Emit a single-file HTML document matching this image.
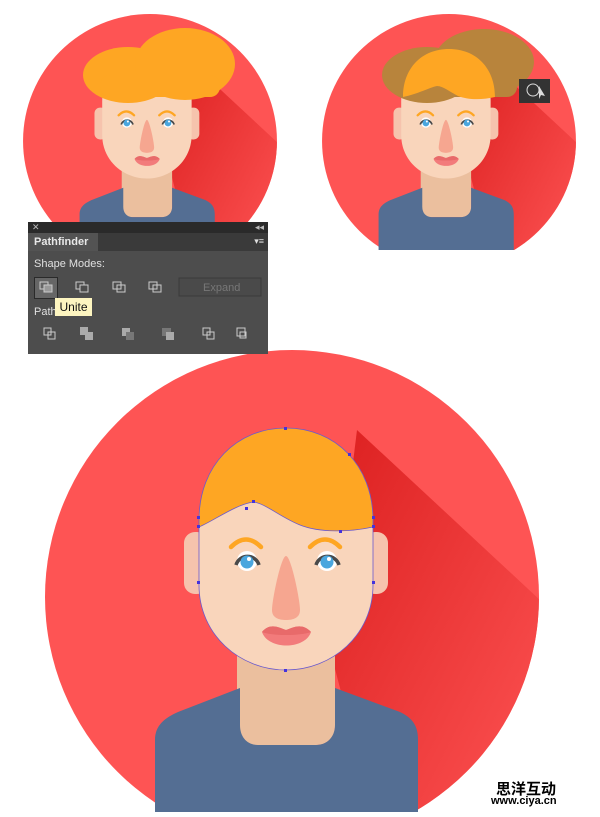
<!DOCTYPE html>
<html><head><meta charset="utf-8"><style>
body{margin:0;width:600px;height:817px;background:#fff;position:relative;overflow:hidden;font-family:"Liberation Sans",sans-serif}
svg{position:absolute;left:0;top:0}
.panel{position:absolute;left:28px;top:222px;width:240px;height:132px;background:#4d4d4d;font-size:11px;color:#ddd}
.bar{height:11px;background:#2a2a2a;color:#bbb;font-size:9px;line-height:11px;padding:0 4px}
.tabs{height:18px;background:#3a3a3a;position:relative}
.tab{position:absolute;left:0;top:0;width:64px;height:18px;background:#535353;font-weight:bold;line-height:18px;padding-left:6px;color:#e8e8e8}
</style></head><body>
<svg width="600" height="817" viewBox="0 0 600 817">
<defs>
<linearGradient id="sh" x1="0" y1="0" x2="1" y2="1"><stop offset="0" stop-color="#d81a1a"/><stop offset="1" stop-color="#fe5454"/></linearGradient>
<clipPath id="cc"><circle cx="292" cy="597" r="247"/></clipPath>
<clipPath id="cb"><rect x="0" y="0" width="600" height="812"/></clipPath>
<g id="av">
 <circle cx="292" cy="597" r="247" fill="#fe5454"/>
 <path d="M357,430 L540,600 L540,840 L380,840 L330,650 Z" fill="url(#sh)" opacity="0.9" clip-path="url(#cc)"/>
 <rect x="237" y="630" width="98" height="115" rx="18" fill="#ebbf9e"/>
 <path d="M155,740 C155,725 165,718 178,712 L240,688 L240,725 C240,738 248,745 258,745 L316,745 C326,745 335,738 335,725 L335,688 L400,712 C412,718 418,725 418,740 L418,812 L155,812Z" fill="#546e93"/>
 <rect x="184" y="532" width="24" height="62" rx="11" fill="#f6c3ad"/>
 <rect x="364" y="532" width="24" height="62" rx="11" fill="#f6c3ad"/>
 <path d="M199,520 L199,585 C199,635 240,670 286,670 C332,670 373,635 373,585 L373,520 C373,465 335,428 286,428 C237,428 199,465 199,520Z" fill="#f9d5bb"/>
 <path d="M231,547 Q246,532 261,547 M310,547 Q325,532 340,547" stroke="#fea623" stroke-width="4.5" fill="none" stroke-linecap="round"/>
 <circle cx="247" cy="561" r="10" fill="#fff"/><circle cx="327" cy="561" r="10" fill="#fff"/>
 <path d="M236,565 A12,12 0 0 1 259,565 M316,565 A12,12 0 0 1 339,565" stroke="#4a4a4a" stroke-width="3.5" fill="none"/>
 <circle cx="247" cy="562" r="6.5" fill="#4aa6de"/><circle cx="327" cy="562" r="6.5" fill="#4aa6de"/>
 <circle cx="249" cy="559" r="2" fill="#fff"/><circle cx="329" cy="559" r="2" fill="#fff"/>
 <path d="M286,556 C281,556 272,600 272,610 C272,618 279,620 286,620 C293,620 300,618 300,610 C300,600 291,556 286,556Z" fill="#f6a690"/>
 <path d="M262,632 C270,622 280,628 286,630 C292,628 302,622 311,632 C305,650 268,650 262,632Z" fill="#f27b7b"/>
 <path d="M262,632 C270,622 280,628 286,630 C292,628 302,622 311,632 C300,636 272,636 262,632Z" fill="#e86a6a"/>
</g>
</defs>
<g clip-path="url(#cb)">
 <use href="#av"/>
 <path d="M199,527 L199,520 C199,465 237,428 286,428 C335,428 373,465 373,520 L373,527 C350,532 320,533 300,525 C280,517 265,503 253,502 C235,505 215,520 199,527Z" fill="#fea623"/>
 <path d="M199,520 L199,585 C199,635 240,670 286,670 C332,670 373,635 373,585 L373,520 C373,465 335,428 286,428 C237,428 199,465 199,520Z M199,527 C215,520 235,505 253,502 C265,503 280,517 300,525 C320,533 350,532 373,527" fill="none" stroke="#6a5acd" stroke-width="0.8"/>
 <g fill="#4433dd"><rect x="284" y="427" width="3" height="3"/><rect x="348" y="453" width="3" height="3"/><rect x="252" y="500" width="3" height="3"/><rect x="245" y="507" width="3" height="3"/><rect x="197" y="516" width="3" height="3"/><rect x="197" y="525" width="3" height="3"/><rect x="339" y="530" width="3" height="3"/><rect x="372" y="516" width="3" height="3"/><rect x="372" y="525" width="3" height="3"/><rect x="197" y="581" width="3" height="3"/><rect x="372" y="581" width="3" height="3"/><rect x="284" y="669" width="3" height="3"/></g>
</g>
<clipPath id="c1"><rect x="0" y="0" width="300" height="222"/></clipPath>
<g clip-path="url(#c1)">
 <g transform="translate(150,141) scale(0.514) translate(-292,-597)"><use href="#av"/></g>
 <ellipse cx="128" cy="75" rx="45" ry="28" fill="#fea623"/>
 <ellipse cx="185" cy="64" rx="50" ry="36" fill="#fea623"/>
 <rect x="100" y="75" width="120" height="22" rx="10" fill="#fea623"/>
</g>
<clipPath id="c2"><rect x="300" y="0" width="300" height="250"/></clipPath>
<g clip-path="url(#c2)">
 <g transform="translate(449,141) scale(0.514) translate(-292,-597)"><use href="#av"/></g>
 <ellipse cx="427" cy="75" rx="45" ry="28" fill="#b8843c"/>
 <ellipse cx="484" cy="62" rx="50" ry="33" fill="#b8843c"/>
 <rect x="399" y="75" width="118" height="22" rx="10" fill="#b8843c"/>
 <path d="M403,97 C403,68 422,49 449,49 C476,49 495,68 495,97 C482,100 468,100 458,96 C450,92 443,86 437,86 C428,88 418,94 403,97Z" fill="#fea623"/>
 <rect x="519" y="79" width="31" height="24" fill="#333"/>
 <circle cx="533" cy="90" r="6" fill="none" stroke="#ddd" stroke-width="1"/>
 <path d="M539,86 L545,96 L541,95 L539,99Z" fill="#ddd"/>
</g>
</svg>
<div class="panel">
 <div class="bar">✕<span style="float:right">◂◂</span></div>
 <div class="tabs"><div class="tab">Pathfinder</div><span style="position:absolute;right:4px;top:3px;font-size:9px">▾≡</span></div>
 <div style="position:absolute;left:6px;top:36px;color:#e0e0e0">Shape Modes:</div>
 <div style="position:absolute;left:6px;top:55px;width:22px;height:20px;border:1px solid #2a2a2a;background:#666"></div>
 <svg width="240" height="132" style="position:absolute;left:0;top:0" fill="none" stroke="#ccc" stroke-width="1">
  <rect x="12" y="60" width="8" height="7"/><rect x="16" y="63" width="8" height="7" fill="#999"/>
  <rect x="48" y="60" width="8" height="7"/><rect x="52" y="63" width="8" height="7" fill="#4d4d4d"/>
  <rect x="85" y="60" width="8" height="7"/><rect x="89" y="63" width="8" height="7"/>
  <rect x="121" y="60" width="8" height="7"/><rect x="125" y="63" width="8" height="7"/>
  <rect x="151" y="56" width="82" height="18" fill="#4a4a4a" stroke="#3a3a3a"/>
  <g fill="#aaa" stroke="none"><rect x="52" y="105" width="8" height="8"/><rect x="57" y="110" width="8" height="8"/><rect x="94" y="106" width="8" height="8"/><rect x="98" y="110" width="8" height="8" fill="#777"/><rect x="134" y="106" width="9" height="8" fill="#777"/><rect x="138" y="110" width="8" height="8"/></g>
  <rect x="16" y="106" width="7" height="7"/><rect x="20" y="110" width="7" height="7"/>
  <rect x="175" y="106" width="7" height="7"/><rect x="179" y="110" width="7" height="7"/>
  <rect x="209" y="106" width="8" height="8"/><rect x="212" y="110" width="6" height="6"/>
 </svg>
 <div style="position:absolute;left:175px;top:60px;color:#777">Expand</div>
 <div style="position:absolute;left:6px;top:84px;color:#e0e0e0">Path</div>
 <div style="position:absolute;left:27px;top:76px;width:37px;height:18px;background:#fdf5c0;color:#111;font-size:12px;line-height:18px;text-align:center">Unite</div>
</div>
<div style="position:absolute;left:496px;top:778px;font-family:'Liberation Sans','Noto Sans CJK SC',sans-serif;font-weight:bold;font-size:15px;color:#000;text-shadow:0 0 2px #fff">思洋互动</div>
<div style="position:absolute;left:491px;top:795px;font-weight:bold;font-size:11px;color:#000">www.ciya.cn</div>
</body></html>
